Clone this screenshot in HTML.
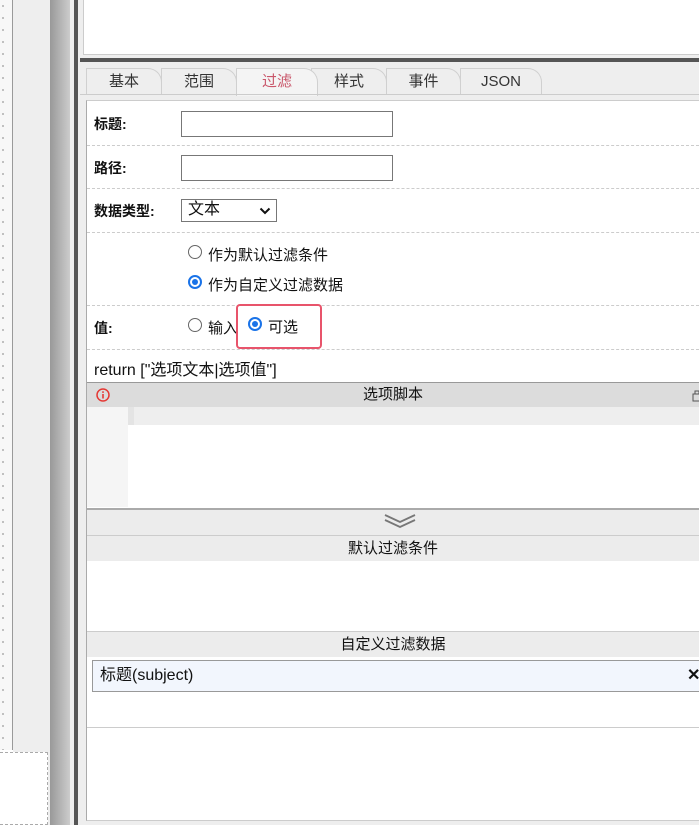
<!DOCTYPE html>
<html><head><meta charset="utf-8"><style>
*{margin:0;padding:0;box-sizing:border-box}
body{width:699px;height:825px;overflow:hidden;position:relative;background:#fff;font-family:"Liberation Sans","Noto Sans CJK SC",sans-serif;font-size:15px;color:#111}
.a{position:absolute}
.lbl{font-weight:bold;font-size:14px}
.dash{position:absolute;left:87px;right:0;border-top:1px dashed #ccc;height:0}
.tab{position:absolute;top:68px;height:27px;border:1px solid #d0d0d0;border-bottom:none;border-radius:0 14px 0 0;background:#eee;text-align:center;line-height:26px;font-size:15px;color:#333}
.inp{position:absolute;border:1px solid #777;background:#fff;height:26px}
.rad{position:absolute;width:14px;height:14px;border:1px solid #666;border-radius:50%;background:#fff}
.rad.on{border:2px solid #1a73e8}
.rad.on::after{content:"";position:absolute;left:2px;top:2px;width:6px;height:6px;border-radius:50%;background:#1a73e8}
.hdr{position:absolute;left:87px;right:0;background:#ececec;text-align:center;font-size:15px;line-height:25px}
</style></head><body>
<div class="a" style="left:0;top:0;width:12px;height:750px;background:#f7f7f7;background-image:radial-gradient(circle,#bbb 1px,transparent 1.2px);background-size:12px 12px;background-position:-3px 0"></div>
<div class="a" style="left:12px;top:0;width:1px;height:750px;background:#999"></div>
<div class="a" style="left:13px;top:0;width:37px;height:825px;background:#eee"></div>
<div class="a" style="left:0;top:752px;width:48px;height:73px;border:1px dashed #aaa;border-left:none;background:#fff"></div>
<div class="a" style="left:50px;top:0;width:20px;height:825px;background:linear-gradient(to right,#999,#ccc)"></div>
<div class="a" style="left:70px;top:0;width:4px;height:825px;background:#eee"></div>
<div class="a" style="left:74px;top:0;width:4px;height:825px;background:#555"></div>
<div class="a" style="left:78px;top:0;width:621px;height:825px;background:#eee"></div>
<div class="a" style="left:83px;top:0;width:616px;height:55px;background:#fff;border-left:1px solid #ccc;border-bottom:1px solid #ccc"></div>
<div class="a" style="left:80px;top:58px;width:619px;height:4px;background:#555"></div>
<div class="tab" style="left:86px;width:76px">基本</div>
<div class="tab" style="left:161px;width:76px">范围</div>
<div class="tab" style="left:386px;width:75px">事件</div>
<div class="tab" style="left:460px;width:82px">JSON</div>
<div class="tab" style="left:311px;width:76px">样式</div>
<div class="tab" style="left:236px;width:82px;background:#f4f4f4;color:#c9566a;height:28px">过滤</div>
<div class="a" style="left:80px;top:94px;width:619px;height:1px;background:#ccc"></div>
<div class="a" style="left:86px;top:100px;width:613px;height:721px;background:#fff;border-left:1px solid #aaa;border-top:1px solid #ccc;border-bottom:1px solid #ccc"></div>

<div class="a lbl" style="left:94px;top:114px">标题:</div>
<div class="inp" style="left:181px;top:111px;width:212px"></div>
<div class="dash" style="top:145px"></div>
<div class="a lbl" style="left:94px;top:158px">路径:</div>
<div class="inp" style="left:181px;top:155px;width:212px"></div>
<div class="dash" style="top:188px"></div>
<div class="a lbl" style="left:94px;top:201px">数据类型:</div>
<div class="inp" style="left:181px;top:199px;width:96px;height:23px;font-size:16px;line-height:20px;padding-left:6px">文本<svg class="a" style="left:77px;top:7px" width="12" height="8" viewBox="0 0 12 8"><path d="M1.5 1.5L6 6l4.5-4.5" stroke="#111" stroke-width="2" fill="none"/></svg></div>
<div class="dash" style="top:232px"></div>
<div class="rad" style="left:188px;top:245px"></div>
<div class="a" style="left:208px;top:244px">作为默认过滤条件</div>
<div class="rad on" style="left:188px;top:275px"></div>
<div class="a" style="left:208px;top:274px">作为自定义过滤数据</div>
<div class="dash" style="top:305px"></div>
<div class="a lbl" style="left:94px;top:318px">值:</div>
<div class="rad" style="left:188px;top:318px"></div>
<div class="a" style="left:208px;top:317px">输入</div>
<div class="a" style="left:236px;top:304px;width:86px;height:45px;border:2px solid #e8546b;border-radius:4px"></div>
<div class="rad on" style="left:248px;top:317px"></div>
<div class="a" style="left:268px;top:316px">可选</div>
<div class="dash" style="top:349px"></div>
<div class="a" style="left:94px;top:356px;font-size:16px">return ["选项文本|选项值"]</div>

<div class="a" style="left:87px;top:382px;right:0;height:25px;background:#dcdcdc;border-top:1px solid #999;text-align:center;line-height:24px">选项脚本</div>
<svg class="a" style="left:96px;top:388px" width="14" height="14" viewBox="0 0 14 14"><circle cx="7" cy="7" r="6" stroke="#e53935" stroke-width="1.5" fill="none"/><rect x="6.2" y="6" width="1.6" height="4.5" fill="#e53935"/><rect x="6.2" y="3.3" width="1.6" height="1.6" fill="#e53935"/></svg>
<svg class="a" style="left:692px;top:389px" width="8" height="14"><rect x="1" y="5" width="8" height="7" stroke="#555" fill="none"/><rect x="3" y="2" width="4" height="3" stroke="#555" fill="none"/></svg>
<div class="a" style="left:87px;top:407px;width:41px;height:100px;background:#f5f5f5"></div>
<div class="a" style="left:128px;top:407px;width:6px;height:18px;background:#e4e4e4"></div>
<div class="a" style="left:134px;top:407px;right:0;height:18px;background:#eee"></div>
<div class="a" style="left:87px;top:508px;right:0;height:28px;background:#ececec;border-top:2px solid #aaa;border-bottom:1px solid #ccc"></div>
<svg class="a" style="left:384px;top:513px" width="32" height="16" viewBox="0 0 32 16"><path d="M1 2l15 7 15-7M1 7l15 7 15-7" stroke="#777" stroke-width="1.8" fill="none"/></svg>
<div class="hdr" style="top:536px">默认过滤条件</div>
<div class="a" style="left:87px;top:631px;right:0;height:1px;background:#ccc"></div>
<div class="hdr" style="top:632px">自定义过滤数据</div>
<div class="a" style="left:92px;top:660px;width:610px;height:32px;background:#f2f6fd;border:1px solid #999;line-height:30px;padding-left:7px;font-size:16px">标题(subject)<span class="a" style="left:594px;top:0;font-weight:bold;font-size:16px">✕</span></div>
<div class="a" style="left:87px;top:727px;right:0;height:1px;background:#ccc"></div>
</body></html>
